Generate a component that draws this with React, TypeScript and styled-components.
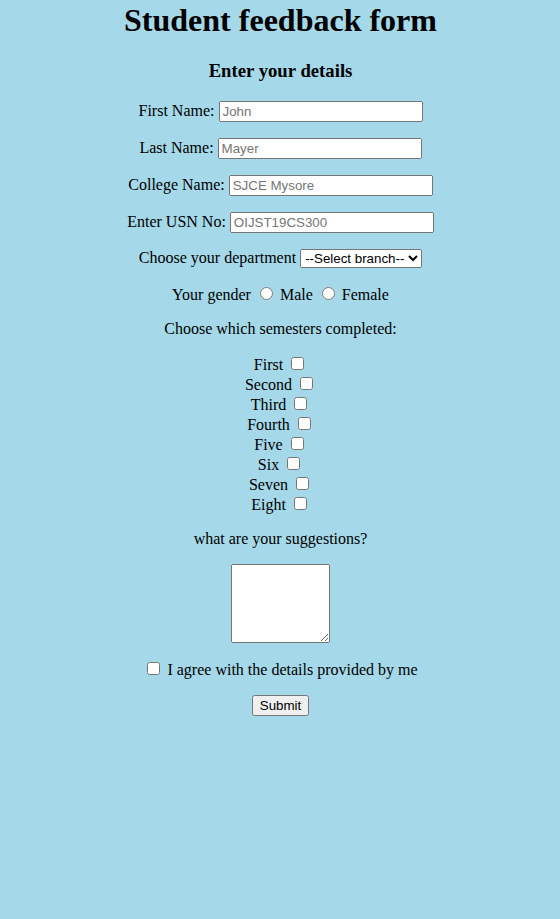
import React from "react";
import styled, { createGlobalStyle } from "styled-components";

const GlobalStyle = createGlobalStyle`
	html, body {
		background: #a5d8e8;
	}
	body {
		margin: 2px 7.5px 0 8.5px;
		font-family: "Liberation Serif", "Times New Roman", serif;
		font-size: 16px;
		color: #000;
	}
	input, select, textarea, button {
		font-family: "Liberation Sans", Arial, sans-serif;
	}
`;

const Form = styled.form`
	text-align: center;
`;

const Title = styled.h1`
	font-size: 32px;
	margin: 0 0 21px;
`;

const SubTitle = styled.h3`
	font-size: 18.72px;
	margin: 18.72px 0;
`;

const Row = styled.p`
	margin: 16px 0;
`;

const TextField = styled.input`
	box-sizing: border-box;
	width: 204px;
`;

const Semesters = styled.div`
	line-height: normal;
`;

const Suggestions = styled.textarea`
	display: block;
	margin: 0 auto;
	width: 93px;
	height: 73px;
`;

const semesters = ["First", "Second", "Third", "Fourth", "Five", "Six", "Seven", "Eight"];

export default function App() {
	return (
		<>
			<GlobalStyle />
			<Form onSubmit={e => e.preventDefault()}>
				<Title>Student feedback form</Title>
				<SubTitle>Enter your details</SubTitle>
				<Row>
					First Name: <TextField type="text" placeholder="John" />
				</Row>
				<Row>
					Last Name: <TextField type="text" placeholder="Mayer" />
				</Row>
				<Row>
					College Name: <TextField type="text" placeholder="SJCE Mysore" />
				</Row>
				<Row>
					Enter USN No: <TextField type="text" placeholder="OIJST19CS300" />
				</Row>
				<Row>
					Choose your department{" "}
					<select defaultValue="">
						<option value="">--Select branch--</option>
						<option value="cse">CSE</option>
						<option value="ise">ISE</option>
						<option value="ece">ECE</option>
					</select>
				</Row>
				<Row>
					Your gender <input type="radio" name="gender" /> Male{" "}
					<input type="radio" name="gender" /> Female
				</Row>
				<Row>Choose which semesters completed:</Row>
				<Semesters>
					{semesters.map(s => (
						<React.Fragment key={s}>
							{s} <input type="checkbox" />
							<br />
						</React.Fragment>
					))}
				</Semesters>
				<Row>what are your suggestions?</Row>
				<Row>
					<Suggestions />
				</Row>
				<Row>
					<input type="checkbox" /> I agree with the details provided by me
				</Row>
				<Row>
					<button type="submit">Submit</button>
				</Row>
			</Form>
		</>
	);
}
